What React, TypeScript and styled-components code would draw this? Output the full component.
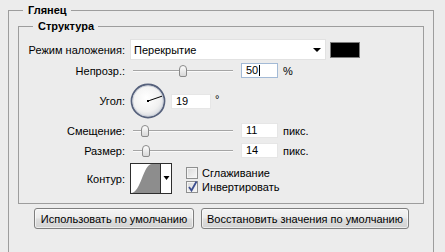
import React from "react";
import styled, { createGlobalStyle } from "styled-components";

const GlobalStyle = createGlobalStyle`
	html,
	body {
		margin: 0;
		background: #ececec;
		overflow: hidden;
	}

	body {
		color: #000;
		font-family: "Liberation Sans", Arial, sans-serif;
		font-size: 11px;
	}
`;

const Page = styled("div")`
	box-sizing: border-box;
	height: 252px;
	overflow: hidden;
	padding: 3px 0 0 8px;
`;

const Group = styled("fieldset")<{ $inner?: boolean }>`
	border: 1px solid #9d9d9d;
	box-sizing: border-box;
	margin: ${({ $inner }): string => ($inner ? "2px 0 0" : "0")};
	min-inline-size: 0;
	padding: ${({ $inner }): string => ($inner ? "6px 0 9px" : "0 9px 40px")};
	width: ${({ $inner }): string => ($inner ? "406px" : "426px")};
`;

const Title = styled("legend")<{ $inner?: boolean }>`
	font-weight: bold;
	height: 14px;
	line-height: 14px;
	margin-left: ${({ $inner }): string => ($inner ? "14px" : "5px")};
	padding: 0 4px 0 5px;
`;

const Row = styled("div")<{ $h: number; $mt?: number }>`
	align-items: center;
	display: flex;
	height: ${({ $h }): string => `${$h}px`};
	margin-top: ${({ $mt }): string => `${$mt ?? 0}px`};
`;

const Label = styled("span")`
	flex: none;
	margin-right: 5px;
	text-align: right;
	width: 106px;
`;

const Select = styled("div")`
	align-items: center;
	background: #fff;
	border: 1px solid #e2e2e2;
	box-sizing: border-box;
	display: flex;
	height: 21px;
	justify-content: space-between;
	padding: 0 4px 0 3px;
	width: 196px;
`;

const Arrow = styled("span")`
	border-left: 4px solid transparent;
	border-right: 4px solid transparent;
	border-top: 4px solid #000;
	height: 0;
	width: 0;
`;

const Swatch = styled("div")`
	background: #000;
	border: 1px solid #7d7d7d;
	box-sizing: border-box;
	height: 16px;
	margin-left: 4px;
	width: 30px;
`;

const Slider = styled("div")`
	flex: none;
	height: 15px;
	margin-left: 3px;
	position: relative;
	width: 100px;

	&::before {
		border-bottom: 1px solid #fafafa;
		border-top: 1px solid #a5a5a5;
		content: "";
		left: 0;
		position: absolute;
		right: 0;
		top: 7px;
	}
`;

const Thumb = styled("span")`
	background: linear-gradient(#fdfdfd, #d8d8d8);
	border: 1px solid #8a8a8a;
	border-radius: 4px 4px 2px 2px;
	box-sizing: border-box;
	height: 12px;
	margin-left: -4px;
	position: absolute;
	top: 2px;
	width: 8px;
`;

const Field = styled("div")<{ $focused?: boolean; $w?: number }>`
	background: #fff;
	border: 1px solid ${({ $focused }): string => ($focused ? "#a3bad6" : "#e6e6e6")};
	box-sizing: border-box;
	flex: none;
	height: 15px;
	line-height: 13px;
	margin-left: ${({ $w }): string => ($w ? "5px" : "8px")};
	padding-left: 4px;
	width: ${({ $w }): string => `${$w ?? 37}px`};
`;

const Caret = styled("span")`
	border-left: 1px solid #000;
	display: inline-block;
	height: 11px;
	margin-left: 1px;
	vertical-align: -2px;
`;

const Unit = styled("span")`
	margin-left: 5px;
`;

const Degree = styled("span")`
	margin-bottom: 4px;
	margin-left: 4px;
`;

const Checks = styled("div")`
	align-self: flex-start;
	display: flex;
	flex-direction: column;
	gap: 2px;
	margin-left: 14px;
	margin-top: 4px;
`;

const Check = styled("label")`
	align-items: center;
	display: flex;
	gap: 4px;
	height: 12px;
`;

const Box = styled("span")`
	background: linear-gradient(135deg, #d9d9d9, #f7f7f7);
	border: 1px solid #8e8f8f;
	box-shadow: inset 0 0 0 1px #f4f4f4;
	box-sizing: border-box;
	display: inline-block;
	height: 12px;
	position: relative;
	width: 12px;
`;

const Tick = styled("svg")`
	left: 1px;
	position: absolute;
	top: -1px;
`;

const Buttons = styled("div")`
	display: flex;
	gap: 7px;
	margin-top: 4px;
	padding-left: 16px;
`;

const Button = styled("button")<{ $w: number }>`
	background: linear-gradient(#f4f4f4 0%, #ececec 45%, #dedede 55%, #d2d2d2 100%);
	border: 1px solid #7f7f7f;
	border-radius: 3px;
	box-shadow: inset 0 0 0 1px rgba(255, 255, 255, 0.6);
	color: #000;
	font: inherit;
	height: 21px;
	padding: 0;
	width: ${({ $w }): string => `${$w}px`};
`;

const ANGLE = 19;

const Dial = (): React.ReactElement => {
	const rad = (ANGLE * Math.PI) / 180;
	const x = 18 + 15 * Math.cos(rad);
	const y = 18 - 15 * Math.sin(rad);

	return (
		<svg width={36} height={36} viewBox="0 0 36 36">
			<defs>
				<radialGradient id="dialFill" cx="45%" cy="40%" r="60%">
					<stop offset="0%" stopColor="#ffffff" />
					<stop offset="70%" stopColor="#f1f1f1" />
					<stop offset="100%" stopColor="#d6d9df" />
				</radialGradient>
			</defs>
			<circle cx={18} cy={18} r={16.5} fill="url(#dialFill)" stroke="#56617c" strokeWidth={1.8} />
			<circle cx={18} cy={18} r={15.2} fill="none" stroke="#c9ced8" strokeWidth={0.8} />
			<line x1={18} y1={18} x2={x} y2={y} stroke="#000" strokeWidth={1} />
			<rect x={17} y={17} width={2} height={2} fill="#000" />
		</svg>
	);
};

const Contour = (): React.ReactElement => (
	<svg width={42} height={31} viewBox="0 0 42 31">
		<rect x={0.5} y={0.5} width={41} height={30} fill="#fff" stroke="#2e2e2e" />
		<path d="M1,30 C11,30 13,1 22,1 L30,1 L30,30 Z" fill="#8d8d8d" />
		<line x1={30.5} y1={1} x2={30.5} y2={30} stroke="#2e2e2e" />
		<path d="M33.5,13 L39.5,13 L36.5,17 Z" fill="#000" />
	</svg>
);

interface CheckProps {
	checked?: boolean;
	text: string;
}

const CheckItem = ({ checked, text }: CheckProps): React.ReactElement => (
	<Check>
		<Box>
			{checked && (
				<Tick width={10} height={11} viewBox="0 0 10 11">
					<path d="M1,6 L3.5,9.5 L8.5,0.5" fill="none" stroke="#3d4f8f" strokeWidth={1.8} />
				</Tick>
			)}
		</Box>
		{text}
	</Check>
);

const App = (): React.ReactElement => (
	<Page>
		<GlobalStyle />
		<Group>
			<Title>Глянец</Title>
			<Group $inner>
				<Title $inner>Структура</Title>

				<Row $h={21}>
					<Label>Режим наложения:</Label>
					<Select>
						Перекрытие
						<Arrow />
					</Select>
					<Swatch />
				</Row>

				<Row $h={15} $mt={3}>
					<Label>Непрозр.:</Label>
					<Slider>
						<Thumb style={{ left: "50%" }} />
					</Slider>
					<Field $focused>
						50
						<Caret />
					</Field>
					<Unit>%</Unit>
				</Row>

				<Row $h={36} $mt={5}>
					<Label>Угол:</Label>
					<Dial />
					<Field $w={40}>{ANGLE}</Field>
					<Degree>°</Degree>
				</Row>

				<Row $h={15} $mt={4}>
					<Label>Смещение:</Label>
					<Slider>
						<Thumb style={{ left: "11.5%" }} />
					</Slider>
					<Field>11</Field>
					<Unit>пикс.</Unit>
				</Row>

				<Row $h={15} $mt={5}>
					<Label>Размер:</Label>
					<Slider>
						<Thumb style={{ left: "12.5%" }} />
					</Slider>
					<Field>14</Field>
					<Unit>пикс.</Unit>
				</Row>

				<Row $h={31} $mt={5}>
					<Label>Контур:</Label>
					<Contour />
					<Checks>
						<CheckItem text="Сглаживание" />
						<CheckItem checked text="Инвертировать" />
					</Checks>
				</Row>
			</Group>

			<Buttons>
				<Button $w={160}>Использовать по умолчанию</Button>
				<Button $w={208}>Восстановить значения по умолчанию</Button>
			</Buttons>
		</Group>
	</Page>
);

export default App;
